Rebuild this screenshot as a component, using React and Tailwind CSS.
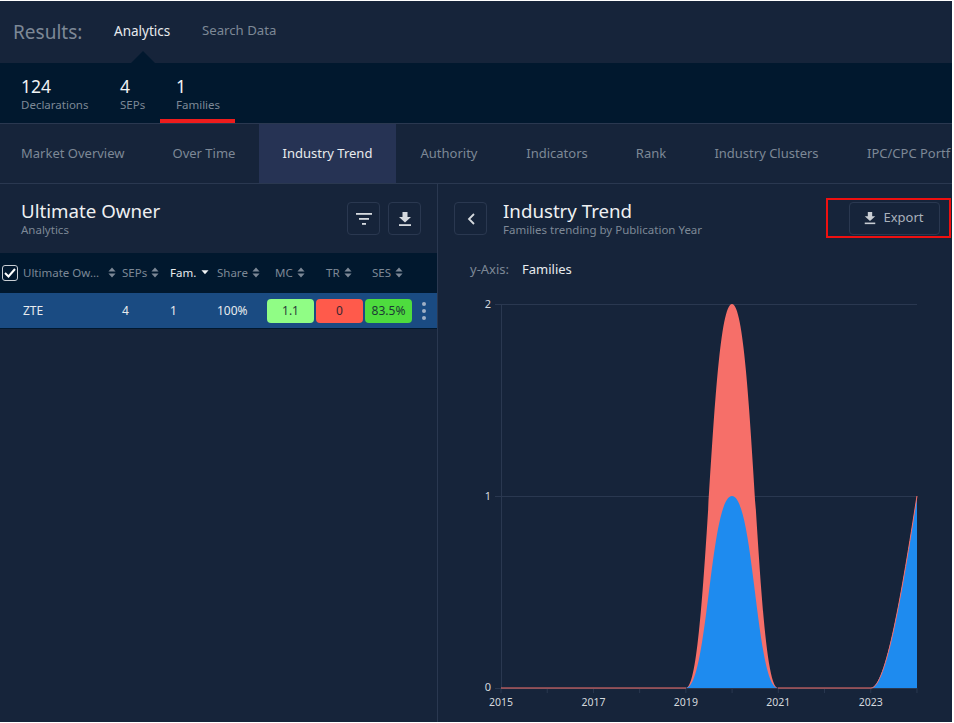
const Sort = () => (
  <svg width="8" height="11" viewBox="0 0 9 12" className="shrink-0" fill="#7d8896">
    <path d="M4.5 0.5 L8.5 5 H0.5 Z" />
    <path d="M4.5 11.5 L8.5 7 H0.5 Z" />
  </svg>
);
const Down = ({ s = 16, c = "#d5d9de" }) => (
  <svg width={s} height={s} viewBox="0 0 16 16" fill={c}>
    <path d="M5.5 1 H10.5 V6 H14 L8 11.5 L2 6 H5.5 Z" />
    <rect x="2" y="13.2" width="12" height="1.8" />
  </svg>
);
const Head = ({ children, cls = "", active }) => (
  <div className={"flex items-center gap-[4px] pb-px " + cls}>
    <span className={active ? "text-[#e8ebee]" : "text-[#7d8896]"}>{children}</span>
    {active ? (
      <svg width="8" height="5" viewBox="0 0 9 5" fill="#f0f2f4" className="ml-[1px]"><path d="M0.5 0 H8.5 L4.5 4.5 Z" /></svg>
    ) : <Sort />}
  </div>
);
const tabs = [
  ["Market Overview", "w-[149px] pl-[21px]"],
  ["Over Time", "w-[110px] justify-center"],
  ["Industry Trend", "w-[137px] justify-center bg-[#263354] text-[#e8ebee]"],
  ["Authority", "w-[106px] justify-center"],
  ["Indicators", "w-[110px] justify-center"],
  ["Rank", "w-[78px] justify-center"],
  ["Industry Clusters", "w-[153px] justify-center"],
  ["IPC/CPC Portf", "w-[85px] pl-[24px] shrink-0"],
];
const Stat = ({ n, l, cls }) => (
  <div className={cls}>
    <div className="text-[17.5px] leading-[22px] text-[#f0f2f4]">{n}</div>
    <div className="text-[11.5px] leading-[16px] text-[#7d8896]">{l}</div>
  </div>
);
const IconBtn = ({ children, cls = "" }) => (
  <div className={"w-[33px] h-[33px] rounded-[4px] border border-[#2a3850] flex items-center justify-center " + cls}>{children}</div>
);
const years = [2015, 2017, 2019, 2021, 2023];
const X = (y) => 63 + (y - 2015) * 46.22;

export default function App() {
  return (
    <div className="bg-white w-[954px] h-[723px] overflow-hidden pt-px">
      <div className="w-[952px] h-[721px] overflow-hidden bg-[#16243a] flex flex-col text-[14px]" style={{ fontFamily: '"Noto Sans", "Open Sans", sans-serif' }}>
        <div className="h-[62px] shrink-0 flex items-center pl-[13px] relative">
          <span className="text-[19px] text-[#7d8896] w-[101px]">Results:</span>
          <span className="text-[#e8ebee] w-[88px] text-[13.5px] pb-[2px]">Analytics</span>
          <span className="text-[#7d8896] text-[13.2px] pb-[2px]">Search Data</span>
          <div className="absolute left-[131px] bottom-0 w-0 h-0 border-l-[12px] border-r-[12px] border-b-[12px] border-l-transparent border-r-transparent border-b-[#01182e]" />
        </div>
        <div className="h-[61px] shrink-0 bg-[#01182e] flex border-b border-[#2a3850] pt-[12px]">
          <Stat n="124" l="Declarations" cls="ml-[21px] w-[99px]" />
          <Stat n="4" l="SEPs" cls="w-[56px]" />
          <div className="relative">
            <Stat n="1" l="Families" />
            <div className="absolute left-[-16px] w-[75px] h-[4px] bg-[#ee1c1c] top-[44px]" />
          </div>
        </div>
        <div className="h-[60px] shrink-0 flex border-b border-[#2a3850] text-[#7d8896] text-[13px] overflow-hidden">
          {tabs.map(([t, c]) => (
            <div key={t} className={"flex items-center shrink-0 whitespace-nowrap " + c}>{t}</div>
          ))}
        </div>
        <div className="flex flex-1 min-h-0">
          <div className="w-[438px] shrink-0 border-r border-[#2a3850] flex flex-col">
            <div className="h-[69px] shrink-0 flex justify-between pl-[21px] pr-[16px] pt-[18px]">
              <div>
                <div className="text-[18.7px] leading-[18px] text-[#eef0f2]">Ultimate Owner</div>
                <div className="text-[11.5px] leading-[14px] mt-[3px] text-[#7d8896]">Analytics</div>
              </div>
              <div className="flex gap-[8px]">
                <IconBtn>
                  <svg width="16" height="12" viewBox="0 0 16 12" fill="#d5d9de"><rect x="0" y="0" width="16" height="1.8" /><rect x="3" y="5" width="10" height="1.8" /><rect x="6" y="10" width="4" height="1.8" /></svg>
                </IconBtn>
                <IconBtn><Down /></IconBtn>
              </div>
            </div>
            <div className="h-[40px] shrink-0 bg-[#01182e] grid grid-cols-[23px_99px_48px_47px_50px_49px_49px_49px] items-center text-[11.5px]">
              <div className="pl-[2px]">
                <div className="w-[16px] h-[16px] rounded-[3px] border border-[#c9ced4] flex items-center justify-center">
                  <svg width="12" height="10" viewBox="0 0 12 10" fill="none" stroke="#ffffff" strokeWidth="2"><path d="M1 5 L4.5 8.5 L11 1" /></svg>
                </div>
              </div>
              <Head><span className="inline-block w-[81px] whitespace-nowrap">Ultimate Ow...</span></Head>
              <Head>SEPs</Head>
              <Head active>Fam.</Head>
              <Head>Share</Head>
              <Head cls="pl-[8px]">MC</Head>
              <Head cls="pl-[10px]">TR</Head>
              <Head cls="pl-[7px]">SES</Head>
            </div>
            <div className="h-[36px] shrink-0 bg-[#1a4b82] border-b border-[#01182e] grid grid-cols-[23px_99px_48px_50px_47px_49px_49px_49px_23px] items-center text-[12px] text-[#e8ebee]">
              <div />
              <div>ZTE</div>
              <div>4</div>
              <div>1</div>
              <div className="-ml-[3px]">100%</div>
              <div className="h-[24px] w-[47px] rounded-[4px] bg-[#90fd85] text-[#28413a] flex items-center justify-center">1.1</div>
              <div className="h-[24px] w-[47px] rounded-[4px] bg-[#ff5a4b] text-[#3b2530] flex items-center justify-center">0</div>
              <div className="h-[24px] w-[47px] rounded-[4px] bg-[#4edc3e] text-[#1c3a35] flex items-center justify-center">83.5%</div>
              <div className="flex flex-col items-center gap-[3px] -ml-[4px]">
                <span className="w-[4px] h-[4px] rounded-full bg-[#9fb0c6]" />
                <span className="w-[4px] h-[4px] rounded-full bg-[#9fb0c6]" />
                <span className="w-[4px] h-[4px] rounded-full bg-[#9fb0c6]" />
              </div>
            </div>
          </div>
          <div className="flex-1 min-w-0 flex flex-col">
            <div className="h-[69px] shrink-0 flex pl-[16px] pt-[18px] relative">
              <IconBtn>
                <svg width="10" height="14" viewBox="0 0 10 14" fill="none" stroke="#d5d9de" strokeWidth="1.8"><path d="M8 2 L3 7 L8 12" /></svg>
              </IconBtn>
              <div className="ml-[16px]">
                <div className="text-[18.7px] leading-[18px] text-[#eef0f2]">Industry Trend</div>
                <div className="text-[11.5px] leading-[14px] mt-[3px] text-[#7d8896]">Families trending by Publication Year</div>
              </div>
              <div className="ml-auto mr-px -mt-[4px] h-[40px] w-[125px] border-2 border-[#ee1010] flex items-center justify-end pr-[9px]">
                <div className="h-[33px] w-[91px] rounded-[4px] border border-[#2a3850] flex items-center justify-center gap-[6px] pr-[2px] text-[13px] text-[#aab2bc]">
                  <Down s={14} c="#c9ced4" />
                  Export
                </div>
              </div>
            </div>
            <div className="h-[33px] shrink-0 flex items-center pl-[32px] text-[13px] pt-[1px]">
              <span className="text-[#7d8896] w-[52px]">y-Axis:</span>
              <span className="text-[#e8ebee]">Families</span>
            </div>
            <svg width="514" height="433" viewBox="0 0 514 433" className="block" fontSize="10.5" fontFamily='"Noto Sans", sans-serif'>
              <g stroke="#2a3850" strokeWidth="1">
                <line x1="57" x2="479" y1="18.5" y2="18.5" />
                <line x1="57" x2="479" y1="210.5" y2="210.5" />
                <line x1="63.5" x2="63.5" y1="18" y2="402" />
                <line x1="57" x2="479" y1="402.5" y2="402.5" />
                {Array.from({ length: 10 }, (_, i) => (
                  <line key={i} x1={X(2015 + i)} x2={X(2015 + i)} y1="402" y2="407" />
                ))}
              </g>
              <path d="M63 402 H248 C270 402 272 18 294 18 C316 18 318 402 340 402 H433 C448 402 464 306 479 210 V402 Z" fill="#f66f69" />
              <path d="M248 402 C270 402 272 210 294 210 C316 210 318 402 340 402 H433 C448 402 464 306 479 211 V402 Z" fill="#1e8bef" />
              <path d="M63 402 H248 M340 402 H433 C448 402 464 306 479 210" fill="none" stroke="#f66f69" strokeWidth="1" />
              <g fill="#d5d9de">
                <text x="53" y="22" textAnchor="end" fontSize="11">2</text>
                <text x="53" y="214" textAnchor="end" fontSize="11">1</text>
                <text x="53" y="405" textAnchor="end" fontSize="11">0</text>
                {years.map((y) => (
                  <text key={y} x={X(y)} y="420" textAnchor="middle">{y}</text>
                ))}
              </g>
            </svg>
          </div>
        </div>
      </div>
    </div>
  );
}
